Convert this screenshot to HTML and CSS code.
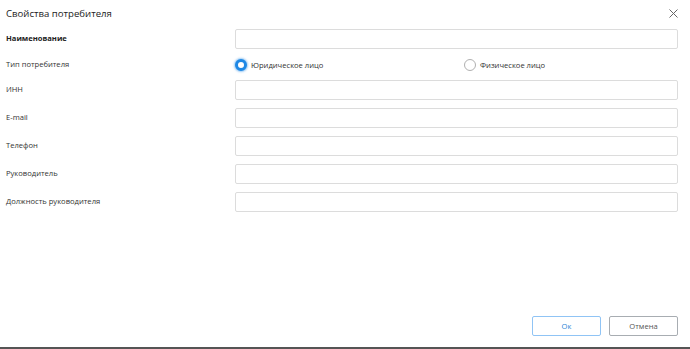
FILE: index.html
```html
<!DOCTYPE html>
<html lang="ru">
<head>
<meta charset="utf-8">
<link rel="stylesheet" href="styles.css">
</head>
<body>
<div class="dialog">
  <div class="header">
    <div class="title">Свойства потребителя</div>
    <button class="close" aria-label="Закрыть">
      <svg width="9" height="9" viewBox="0 0 9 9"><path d="M0.5 0.5L8.5 8.5M8.5 0.5L0.5 8.5" stroke="#666" stroke-width="1" fill="none"/></svg>
    </button>
  </div>
  <div class="form">
    <label class="label bold">Наименование</label>
    <div class="input"></div>
    <label class="label">Тип потребителя</label>
    <div class="radios">
      <div class="radio-item first"><span class="radio checked"></span><span>Юридическое лицо</span></div>
      <div class="radio-item"><span class="radio"></span><span>Физическое лицо</span></div>
    </div>
    <label class="label">ИНН</label>
    <div class="input"></div>
    <label class="label">E-mail</label>
    <div class="input"></div>
    <label class="label">Телефон</label>
    <div class="input"></div>
    <label class="label">Руководитель</label>
    <div class="input"></div>
    <label class="label">Должность руководителя</label>
    <div class="input"></div>
  </div>
  <div class="footer">
    <button class="btn ok">Ок</button>
    <button class="btn cancel">Отмена</button>
  </div>
</div>
</body>
</html>
```
FILE: styles.css
```css
* { box-sizing: border-box; }
html, body { margin: 0; padding: 0; background: #fff; }
body {
  font-family: "Open Sans", "Noto Sans", sans-serif;
  color: #333;
}
.dialog {
  width: 690px;
  height: 349px;
  display: flex;
  flex-direction: column;
  border-bottom: 2px solid #555;
}
.header {
  height: 29px;
  display: flex;
  align-items: flex-start;
  justify-content: space-between;
  padding: 6px 12px 0 6px;
}
.title {
  font-size: 9.6px;
  line-height: 16px;
  color: #222;
}
.close {
  border: none;
  background: none;
  padding: 0;
  margin-top: 3px;
  width: 9px;
  height: 9px;
  display: flex;
}
.form {
  display: grid;
  grid-template-columns: 229px 443px;
  grid-template-rows: 20px 15px repeat(5, 20px);
  row-gap: 8px;
  padding-left: 6px;
  align-items: center;
}
.label {
  font-size: 7.6px;
  line-height: 12px;
  color: #333;
  margin-top: -2px;
}
.label.bold { font-weight: 700; color: #222; }
.input {
  height: 20px;
  border: 1px solid #dcdcdc;
  border-radius: 2px;
  background: #fff;
}
.radios {
  display: flex;
  align-items: center;
  height: 15px;
}
.radio-item {
  display: flex;
  align-items: center;
  gap: 4px;
  font-size: 7.6px;
  color: #333;
}
.radio-item.first { width: 229px; }
.radio {
  width: 12px;
  height: 12px;
  border-radius: 50%;
  border: 1px solid #b0b0b0;
  background: #fff;
}
.radio.checked {
  border: 3px solid #1e88e5;
  box-shadow: 0 0 2px 1px rgba(30, 136, 229, 0.45);
}
.footer {
  margin-top: auto;
  display: flex;
  justify-content: flex-end;
  gap: 8px;
  padding: 0 12px 11px 0;
}
.btn {
  width: 69px;
  height: 20px;
  border-radius: 2px;
  background: #fff;
  font-family: "Open Sans", "Noto Sans", sans-serif;
  font-size: 7.6px;
  padding: 0;
}
.btn.ok { border: 1px solid #90c4f5; color: #2a86d6; }
.btn.cancel { border: 1px solid #a8adb2; color: #555; }
```
